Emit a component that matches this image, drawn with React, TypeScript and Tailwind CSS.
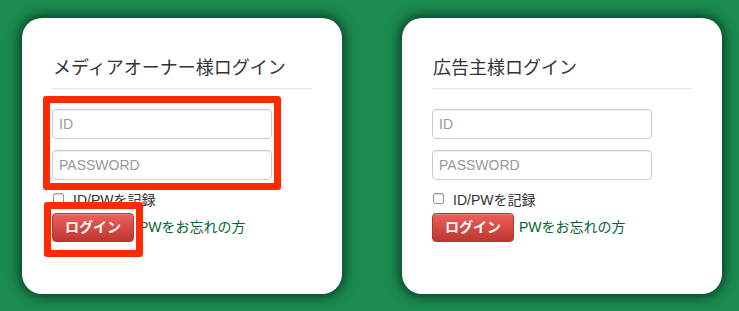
import React from "react";

const font = { fontFamily: '"Liberation Sans", "Noto Sans CJK JP", sans-serif' };

const LoginCard = ({ title, marked }: { title: string; marked?: boolean }) => {
  return (
    <div className="relative w-[320px] h-[276px] bg-white rounded-[20px] shadow-[0_0_12px_3px_rgba(0,40,20,0.75)] pt-[38px] px-[30px]">
      <h2 className="text-[18px] leading-[24px] text-[#333] font-normal pb-[8px] border-b border-[#e5e5e5] pl-[1px]">
        {title}
      </h2>

      <div className="mt-[20px] flex flex-col gap-[11px]">
        <input
          type="text"
          placeholder="ID"
          className="w-[220px] h-[30px] px-[6px] text-[14px] text-[#555] placeholder:text-[#999] border border-[#ccc] rounded-[4px] shadow-[inset_0_1px_1px_rgba(0,0,0,0.075)] outline-none"
        />
        <input
          type="password"
          placeholder="PASSWORD"
          className="w-[220px] h-[30px] px-[6px] text-[14px] text-[#555] placeholder:text-[#999] border border-[#ccc] rounded-[4px] shadow-[inset_0_1px_1px_rgba(0,0,0,0.075)] outline-none"
        />
      </div>

      <label className="mt-[10px] flex items-center gap-[9px] text-[14px] leading-[20px] text-[#333]">
        <span className="w-[11px] h-[11px] border border-[#999] rounded-[2px] bg-white shadow-[inset_0_1px_1px_rgba(0,0,0,0.15)] -mt-[4px] ml-[1px]" />
        ID/PWを記録
      </label>

      <div className="mt-[3px] flex items-center gap-[5px]">
        <button className="w-[82px] h-[29px] rounded-[4px] text-white text-[14px] font-bold bg-gradient-to-b from-[#ee5f5b] to-[#bd362f] border border-[#b33630] shadow-[inset_0_1px_0_rgba(255,255,255,0.2)]">
          ログイン
        </button>
        <a href="#" className="text-[14px] text-[#00662f]">
          PWをお忘れの方
        </a>
      </div>

      {marked && (
        <>
          <div className="absolute left-[21px] top-[78px] w-[238px] h-[94px] border-[7px] border-[#ff2a00] rounded-[3px]" />
          <div className="absolute left-[22px] top-[184px] w-[99px] h-[55px] border-[7px] border-[#ff2a00] rounded-[3px]" />
        </>
      )}
    </div>
  );
};

export default function App() {
  return (
    <div className="w-[739px] h-[311px] bg-[#1b8b50] flex gap-[60px] pl-[22px] pt-[18px]" style={font}>
      <LoginCard title="メディアオーナー様ログイン" marked />
      <LoginCard title="広告主様ログイン" />
    </div>
  );
}
